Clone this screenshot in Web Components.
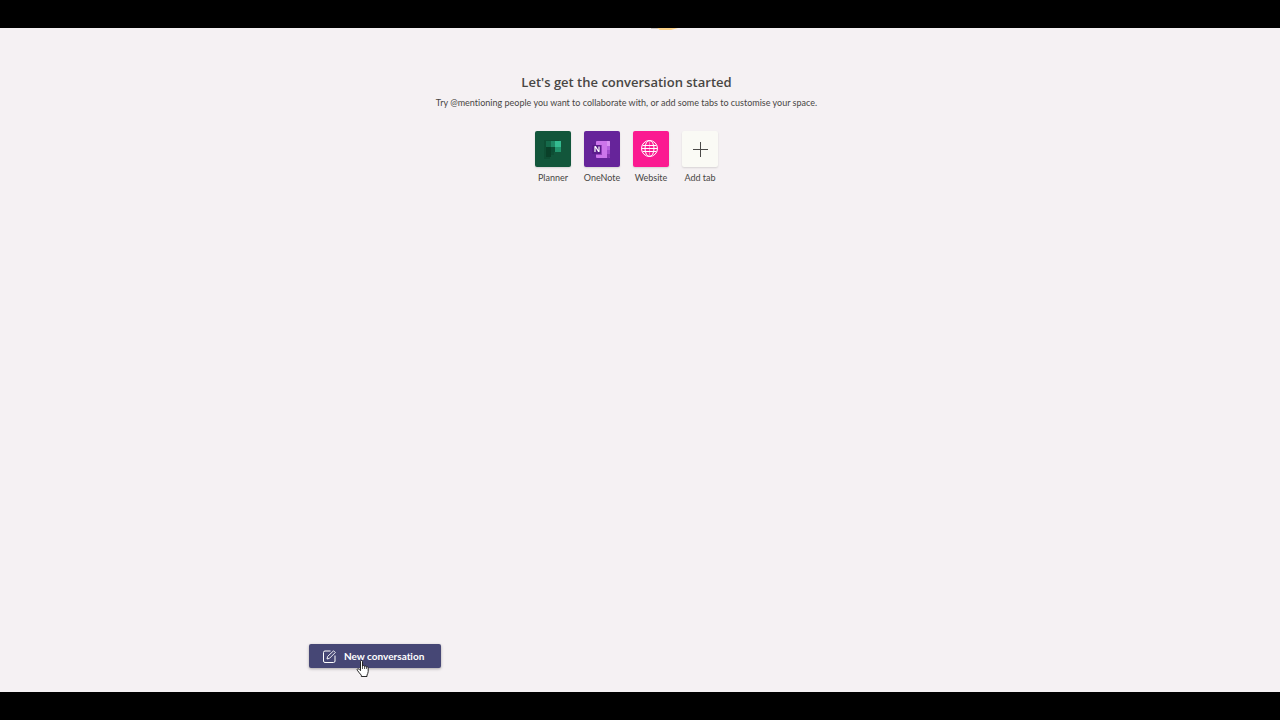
<!DOCTYPE html>
<html lang="en-GB">
<head>
<meta charset="utf-8">
<title>New conversation</title>
<style>
html, body { margin: 0; background: #000; }
body { font-family: Lato, "Open Sans", sans-serif; color: #484644; }
</style>
</head>
<body>
<channel-page>
  <welcome-panel>
    <span slot="title">Let's get the conversation started</span>
    <span slot="hint">Try @mentioning people you want to collaborate with, or add some tabs to customise your space.</span>
    <app-tile label="Planner" style="--tile: #12563b">
      <svg width="36" height="36" viewBox="0 0 36 36" aria-hidden="true">
        <path d="M9 9h15v12h-5v3h-4v4H9z" fill="#0e4e34"/>
        <path d="M11 10h5v6h-5z" fill="#15694a"/>
        <path d="M11 16h5v10h-5z" fill="#0a4029"/>
        <path d="M16 10h5v6h-5z" fill="#1f8a66"/>
        <path d="M16 16h4v5h-4z" fill="#0c4d34"/>
        <path d="M20 10h6v6h-6z" fill="#34bb90"/>
        <path d="M20 16h6v5h-6z" fill="#22946d"/>
      </svg>
    </app-tile>
    <app-tile label="OneNote" style="--tile: #66249a">
      <svg width="36" height="36" viewBox="0 0 36 36" aria-hidden="true">
        <rect x="12" y="10" width="14" height="17" rx="1" fill="#cc75eb"/>
        <path d="M23 10h2a1 1 0 0 1 1 1v4h-3z" fill="#d890f2"/>
        <path d="M23 15h3v4h-3z" fill="#b460de"/>
        <path d="M23 19h3v4h-3z" fill="#a04acc"/>
        <path d="M23 23h3v3a1 1 0 0 1-1 1h-2z" fill="#8535b0"/>
        <path d="M12 14h6v10h-6z" fill="#943fbc"/>
        <rect x="8" y="14" width="9" height="9" rx="1" fill="#5b1c8c"/>
        <path d="M11 21v-5.500h.5l3 5h.5v-5" fill="none" stroke="#fff" stroke-width="1.200" stroke-linejoin="round"/>
      </svg>
    </app-tile>
    <app-tile label="Website" style="--tile: #fb1a91">
      <svg width="36" height="36" viewBox="0 0 36 36" fill="none" stroke="#fff" aria-hidden="true">
        <circle cx="16.500" cy="17.500" r="8"/>
        <ellipse cx="16.500" cy="17.500" rx="4.500" ry="8"/>
        <path d="M8.500 17.500h16M9.500 14.500h14M9.500 20.500h14"/>
        <path d="M16.500 9.500v16" stroke-opacity=".4"/>
      </svg>
    </app-tile>
    <app-tile label="Add tab" style="--tile: #fafaf5">
      <svg width="36" height="36" viewBox="0 0 36 36" fill="none" stroke="#4a4948" aria-hidden="true">
        <path d="M18.500 11v15M11 18.500h15"/>
      </svg>
    </app-tile>
  </welcome-panel>
  <compose-button>New conversation</compose-button>
</channel-page>

<script>
function define(name, html) {
  const template = document.createElement('template');
  template.innerHTML = html;
  customElements.define(name, class extends HTMLElement {
    constructor() {
      super();
      this.attachShadow({ mode: 'open' }).append(template.content.cloneNode(true));
    }
    connectedCallback() {
      const label = this.shadowRoot.querySelector('.label');
      if (label) label.textContent = this.getAttribute('label');
    }
  });
}

define('app-tile', `
  <style>
    :host { display: block; width: 36px; }
    button { display: flex; flex-direction: column; align-items: center; gap: 4px; width: 100%; padding: 0; border: 0; background: none; color: inherit; font: 9px/14px Lato, "Open Sans", sans-serif; cursor: pointer; }
    .icon { width: 36px; height: 36px; border-radius: 2px; background: var(--tile); box-shadow: 0 1px 2px rgba(0, 0, 0, .13); }
    .label { white-space: nowrap; }
    ::slotted(svg) { display: block; }
  </style>
  <button type="button"><span class="icon"><slot></slot></span><span class="label"></span></button>`);

define('welcome-panel', `
  <style>
    :host { display: flex; flex-direction: column; align-items: center; text-align: center; }
    .art { width: 28px; height: 2px; margin-left: 76px; }
    .art svg { display: block; }
    h1 { margin: 42px 0 0; font: 600 13px/20px "Open Sans", "Noto Sans", sans-serif; }
    p { margin: 0; font-size: 9px; line-height: 22px; font-variant-ligatures: none; }
    .apps { display: flex; gap: 13px; margin-top: 17px; }
  </style>
  <div class="art"><svg width="28" height="2" viewBox="0 0 28 2" aria-hidden="true"><path d="M0 0h7v1H0z" fill="#c9c5c2"/><path d="M6 0h21L20 2H9z" fill="#fbd28a"/></svg></div>
  <h1><slot name="title"></slot></h1>
  <p><slot name="hint"></slot></p>
  <div class="apps"><slot></slot></div>`);

define('compose-button', `
  <style>
    :host { display: block; }
    button { display: flex; align-items: center; gap: 8px; height: 24px; padding: 0 17px 0 14px; border: 0; border-radius: 2px; background: #464775; color: #fff; font: 700 10px/16px Lato, "Open Sans", sans-serif; font-variant-ligatures: none; box-shadow: 0 1px 3px rgba(0, 0, 0, .3); cursor: pointer; white-space: nowrap; }
    .wrap { position: relative; width: max-content; }
    .pointer { position: absolute; left: 47px; top: 16px; pointer-events: none; }
  </style>
  <div class="wrap">
    <button type="button">
      <svg width="13" height="13" viewBox="0 0 13 13" fill="none" stroke="#fff" aria-hidden="true">
        <path d="M7.5 1H2a1.5 1.5 0 0 0-1.5 1.5V11A1.5 1.5 0 0 0 2 12.5h8.5A1.5 1.5 0 0 0 12 11V5.5"/>
        <path d="M4 9l.7-2.7L10.6.8l1.7 1.7-5.8 5.8z" stroke-width=".9"/>
      </svg>
      <slot></slot>
    </button>
    <svg class="pointer" width="14" height="18" viewBox="0 0 14 18" aria-hidden="true">
      <path d="M4.500 1.500c0-1.300 2-1.300 2 0V6c.5-.8 2-.5 2 .4.6-.6 1.900-.3 1.900.6.600-.5 1.800-.1 1.800.9v3.600c0 1.500-.7 2.300-1.200 3.500v1.500H5.300v-1.300C4 13.700 2.500 12 1.300 10.200c-.7-1.200.7-2 1.700-1l1.500 1.500z" fill="#fff" stroke="#111" stroke-width=".9" stroke-linejoin="round"/>
      <path d="M6.500 6v3M8.500 6.500V9M10.400 7v2" stroke="#111" stroke-width=".7"/>
    </svg>
  </div>`);

define('channel-page', `
  <style>
    :host { display: flex; flex-direction: column; box-sizing: border-box; min-height: 100vh; padding: 28px 0; background: #000; }
    main { flex: 1; display: flex; flex-direction: column; background: #f5f1f3; padding: 0 27px 24px 0; }
    .column { flex: 1; display: flex; flex-direction: column; justify-content: space-between; width: 100%; max-width: 635px; margin: 0 auto; }
  </style>
  <main><div class="column"><slot></slot></div></main>`);
</script>
</body>
</html>
